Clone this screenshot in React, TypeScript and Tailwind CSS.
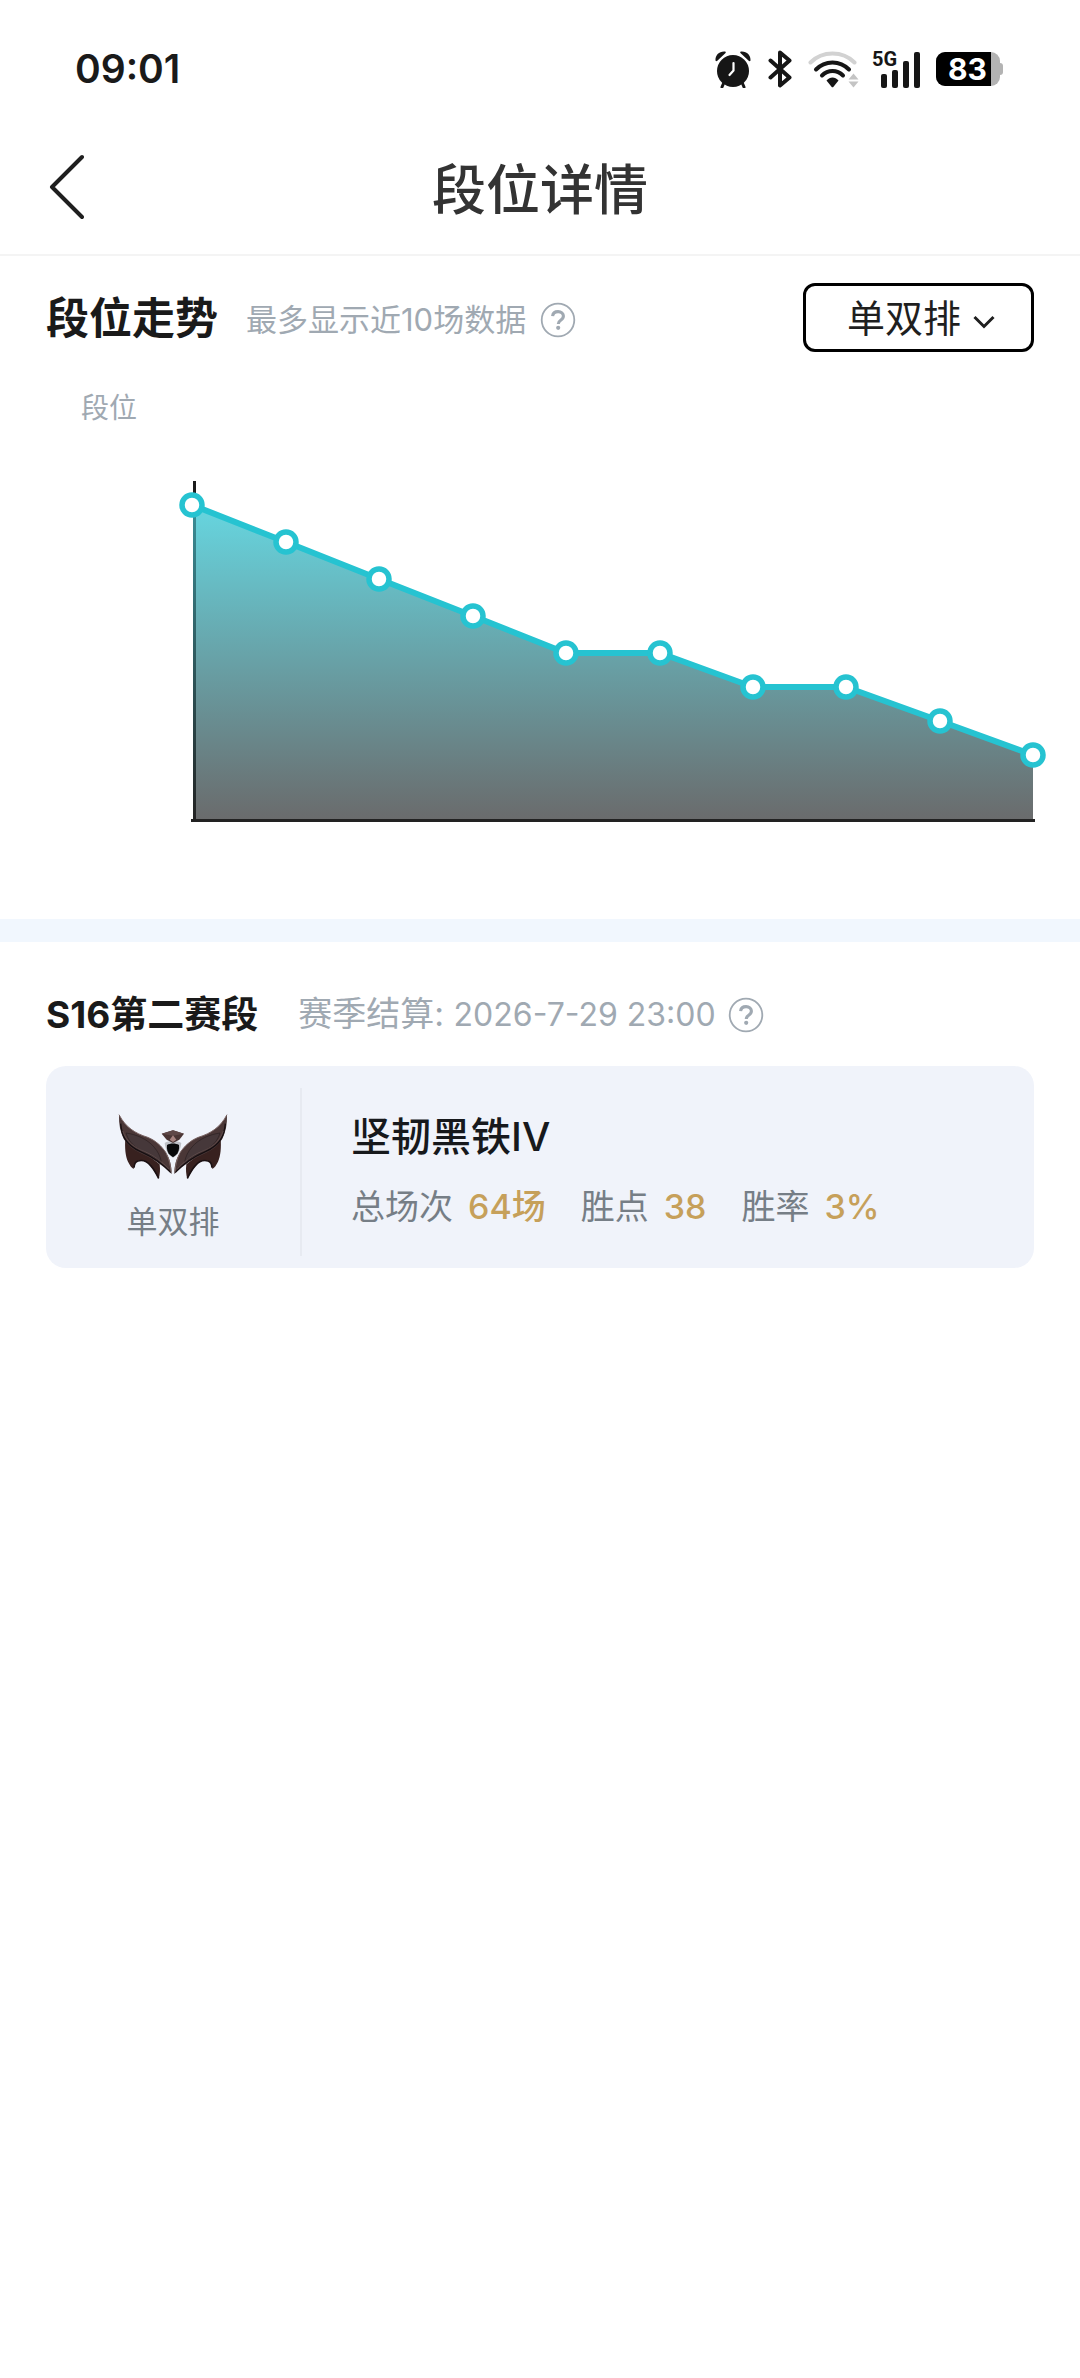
import { useState } from "react";

const points = [
  [192, 505],
  [286, 542],
  [379, 579],
  [473, 616],
  [566, 653],
  [660, 653],
  [753, 687],
  [846, 687],
  [940, 721],
  [1033, 755],
];

const stats = [
  { label: "总场次", value: "64场" },
  { label: "胜点", value: "38" },
  { label: "胜率", value: "3%" },
];

function HelpIcon() {
  return (
    <svg className="w-9 h-9 shrink-0" viewBox="0 0 36 36" fill="none" stroke="#a0a9b2">
      <circle cx="18" cy="18" r="16.3" strokeWidth="1.8" />
      <path d="M12.6 14.2c.3-3 2.500-4.600 5.500-4.600 3.100 0 5.300 1.800 5.300 4.500 0 2-1 3.100-2.700 4.200-1.700 1.100-2.400 1.900-2.400 3.700" strokeWidth="3.100" />
      <circle cx="18.200" cy="25.800" r="2.100" fill="#a0a9b2" stroke="none" />
    </svg>
  );
}

function StatusIcons() {
  return (
    <div className="flex items-center text-[#161616]">
      {/* Alarm */}
      <svg className="w-[38px] h-[38px]" viewBox="0 0 38 38" fill="currentColor">
        <circle cx="19" cy="21" r="16" />
        <path d="M1.500 10.500C1 5 5.500 1 11 1.500c1 .2 1 1.200.3 1.700L3.300 10.800c-.7.600-1.600.500-1.800-.3zM36.500 10.500C37 5 32.500 1 27 1.500c-1 .2-1 1.200-.3 1.700l8 7.600c.7.600 1.600.500 1.800-.3z" />
        <path d="M9.500 33.500L8 37M28.500 33.500L30 37" stroke="currentColor" strokeWidth="3" strokeLinecap="round" />
        <path d="M19.500 13v7.500L15.500 25" fill="none" stroke="#fff" strokeWidth="2.200" strokeLinecap="round" strokeLinejoin="round" />
      </svg>
      {/* Bluetooth */}
      <svg className="w-6 h-[38px] ml-4" viewBox="0 0 24 38" fill="none" stroke="currentColor" strokeWidth="4" strokeLinecap="round" strokeLinejoin="round">
        <path d="M2.500 10.500l19 17L12 35.500V2.500l9.500 8-19 17" />
      </svg>
      {/* Wifi */}
      <svg className="w-[52px] h-[38px] ml-4" viewBox="0 0 52 38" fill="none" strokeLinecap="round">
        <path d="M2.500 12.500C14.500.5 34.500.5 46.500 12.500" stroke="#d2d2d2" strokeWidth="4" />
        <path d="M8 19.500c9-9.500 24-9.500 33 0" stroke="currentColor" strokeWidth="4" />
        <path d="M14 25.500c6-6 15-6 21 0" stroke="currentColor" strokeWidth="4" />
        <path d="M18.500 30.500c3.500-4 8.500-4 12 0l-5 6.200c-.6.700-1.400.7-2 0z" fill="currentColor" />
        <path d="M40.500 29.500l5-6 5 6zM40.500 31.500l5 6 5-6z" fill="#c4c4c4" />
      </svg>
      {/* Signal */}
      <div className="relative w-12 h-[38px] ml-3">
        <svg className="w-12 h-[38px]" viewBox="0 0 48 38" fill="currentColor">
          <rect x="9" y="24" width="6" height="14" rx="2" />
          <rect x="20" y="20" width="6" height="18" rx="2" />
          <rect x="31" y="11" width="6" height="27" rx="2" />
          <rect x="42" y="2" width="6" height="36" rx="2" />
        </svg>
        <span className="absolute left-0 top-0 text-[20px] leading-[18px] font-bold font-['Roboto',sans-serif]">5G</span>
      </div>
      {/* Battery */}
      <div className="flex items-center ml-4">
        <div className="flex w-16 h-[34px] rounded-[9px] overflow-hidden bg-[#b3b3b3]">
          <span className="w-[55px] pl-2 bg-black text-white text-center text-[30px] leading-[34px] font-bold font-['Inter',sans-serif]">83</span>
        </div>
        <span className="w-[3px] h-3 rounded-r-[3px] bg-[#b3b3b3]" />
      </div>
    </div>
  );
}

function TrendChart() {
  const line = points.map((p) => p.join(",")).join(" ");
  return (
    <svg className="block w-full" viewBox="0 440 1080 440" role="img" aria-label="段位走势">
      <defs>
        <linearGradient id="area" gradientUnits="userSpaceOnUse" x1="0" y1="505" x2="0" y2="820">
          <stop offset="0" stopColor="#66d6e0" />
          <stop offset="1" stopColor="#6a6b6c" />
        </linearGradient>
        <linearGradient id="axis" gradientUnits="userSpaceOnUse" x1="0" y1="505" x2="0" y2="820">
          <stop offset="0" stopColor="#3b8f98" />
          <stop offset="1" stopColor="#222222" />
        </linearGradient>
      </defs>
      <polygon points={`193,820 193,505 ${line} 1033,820`} fill="url(#area)" />
      <rect x="193" y="481" width="3" height="24" fill="#1c1c1c" />
      <rect x="193" y="505" width="3" height="315" fill="url(#axis)" />
      <rect x="191" y="819" width="844" height="3" fill="#222222" />
      <polyline points={line} fill="none" stroke="#26c3d1" strokeWidth="6" strokeLinejoin="round" />
      {points.map(([x, y]) => (
        <circle key={x} cx={x} cy={y} r="10" fill="#fff" stroke="#26c3d1" strokeWidth="5.500" />
      ))}
    </svg>
  );
}

function Wing() {
  return (
    <>
      <path d="M80 142c-2 30 0 55 8 72 5 10 10 18 17 22 1-12 4-20 12-24 14-4 28 2 38 14 10 11 17 24 25 40 4-14 5-28 3-44z" fill="#38211f" />
      <path d="M106 232c1-12 4-18 12-20 14-4 28 2 38 14 10 11 17 24 24 38" fill="none" stroke="#1b1012" strokeWidth="5" />
      <path d="M61 73c-1 28 4 52 14 72 10 18 26 32 48 42 34 15 66 34 96 64 0-26-6-46-16-62-14-22-32-38-56-48-38-12-66-30-86-68z" fill="#4a3737" />
      <path d="M61 73c20 38 48 56 86 68 24 10 42 26 56 48" fill="none" stroke="#7a6463" strokeWidth="3" />
      <path d="M82 128c30 4 64 18 84 42 12 14 18 26 22 44-22-16-46-26-68-38-20-12-32-28-38-48z" fill="#46383a" stroke="#2a1f21" strokeWidth="2" />
      <path d="M66 100c2 22 6 34 12 44 10 18 26 30 48 40 34 15 64 34 90 62" fill="none" stroke="#150e11" strokeWidth="4" />
      <path d="M72 122c12 34 36 50 66 62 28 12 50 28 72 52" fill="none" stroke="#6b5655" strokeWidth="2" />
      <path d="M203 190c8 16 13 34 14 54" fill="none" stroke="#806a68" strokeWidth="3" />
    </>
  );
}

function IronEmblem() {
  return (
    <svg className="w-28 h-[70px]" viewBox="55 65 336 210" aria-hidden="true">
      <Wing />
      <g transform="translate(446 0) scale(-1 1)">
        <Wing />
      </g>
      <path d="M198 158c14-8 36-8 50 0-2 14-6 28-14 36l-11 8-11-8c-8-8-12-22-14-36z" fill="#8d9094" opacity="0.5" />
      <path d="M205 164c10-6 26-6 36 0 2 12-2 24-9 30l-9 7-9-7c-7-6-11-18-9-30z" fill="#08090a" />
      <path d="M189 130l34-10 33 10-14 18-19 10-19-10z" fill="#4a3534" />
      <path d="M189 130l34-10 33 10-33 6z" fill="#5f4847" />
      <path d="M223 135l-10 13 10 7 10-7z" fill="#a5827e" />
    </svg>
  );
}

export default function App() {
  const [queue, setQueue] = useState("solo");

  return (
    <div className="min-h-screen bg-white font-['Inter','Noto_Sans_CJK_SC',sans-serif] text-[#1a1a1a]">
      <div className="mt-7 h-[82px] flex items-center justify-between pl-[75px] pr-[77px]">
        <span className="text-[39px] leading-10 font-semibold">09:01</span>
        <StatusIcons />
      </div>

      <header className="mt-[10px] h-[136px] grid grid-cols-[120px_1fr_120px] items-center border-b-2 border-[#f4f4f4]">
        <button type="button" aria-label="返回" className="pl-12 py-4">
          <svg className="w-9 h-[66px]" viewBox="0 0 36 66" fill="none" stroke="#1f1f1f" strokeWidth="4" strokeLinecap="round" strokeLinejoin="round">
            <path d="M34 3L4 33l30 30" />
          </svg>
        </button>
        <h1 className="pt-2 text-[54px] leading-[64px] font-medium text-center text-[#333333]">段位详情</h1>
      </header>

      <section>
        <div className="flex items-center justify-between pt-[27px] px-[46px]">
          <div className="flex items-center">
            <h2 className="text-[43px] leading-[48px] font-bold">段位走势</h2>
            <div className="mt-1 ml-7 flex items-center gap-[14px]">
              <p className="text-[31px] leading-[48px] text-[#a0a9b2]">最多显示近10场数据</p>
              <HelpIcon />
            </div>
          </div>
          <div className="relative">
            <select
              aria-label="排位类型"
              value={queue}
              onChange={(e) => setQueue(e.target.value)}
              className="appearance-none block w-[231px] h-[69px] pl-[41px] rounded-xl border-3 border-black bg-white text-[38px] leading-[48px] text-[#1f1f1f]"
            >
              <option value="solo">单双排</option>
              <option value="flex">灵活排</option>
            </select>
            <svg className="absolute right-[39px] top-[32px] w-[22px] h-[14px] pointer-events-none" viewBox="0 0 22 14" fill="none" stroke="#1f1f1f" strokeWidth="3">
              <path d="M1.500 2l9.500 9.500L20.500 2" />
            </svg>
          </div>
        </div>
        <p className="mt-8 ml-[81px] text-[28px] leading-[48px] text-[#a0a9b2]">段位</p>
        <div className="mt-2">
          <TrendChart />
        </div>
      </section>

      <div className="mt-[39px] h-[23px] bg-[#f1f7fe]" />

      <section className="px-[46px] pt-12">
        <div className="flex items-center">
          <h2 className="text-[37px] leading-[48px] font-bold">S16第二赛段</h2>
          <p className="ml-10 text-[34px] leading-[48px] text-[#a0a9b2]">
            赛季结算: <time className="text-[32px]">2026-7-29 23:00</time>
          </p>
          <span className="ml-3">
            <HelpIcon />
          </span>
        </div>

        <div className="mt-[27px] flex rounded-[20px] bg-[#f0f3fa] pt-[22px] pb-3">
          <div className="w-[256px] flex flex-col items-center pt-6 pb-[10px] border-r-2 border-[#e7eaf1]">
            <IronEmblem />
            <span className="mt-4 text-[31px] leading-[48px] text-[#767e86]">单双排</span>
          </div>
          <div className="pl-[49px]">
            <h3 className="mt-6 text-[40px] leading-[50px] font-medium text-[#17191c]">坚韧黑铁IV</h3>
            <dl className="mt-5 flex gap-[35px] text-[34px] leading-[50px]">
              {stats.map((s) => (
                <div key={s.label} className="flex gap-[15px]">
                  <dt className="text-[#767e86]">{s.label}</dt>
                  <dd className="font-medium text-[#c6a05a]">{s.value}</dd>
                </div>
              ))}
            </dl>
          </div>
        </div>
      </section>
    </div>
  );
}
